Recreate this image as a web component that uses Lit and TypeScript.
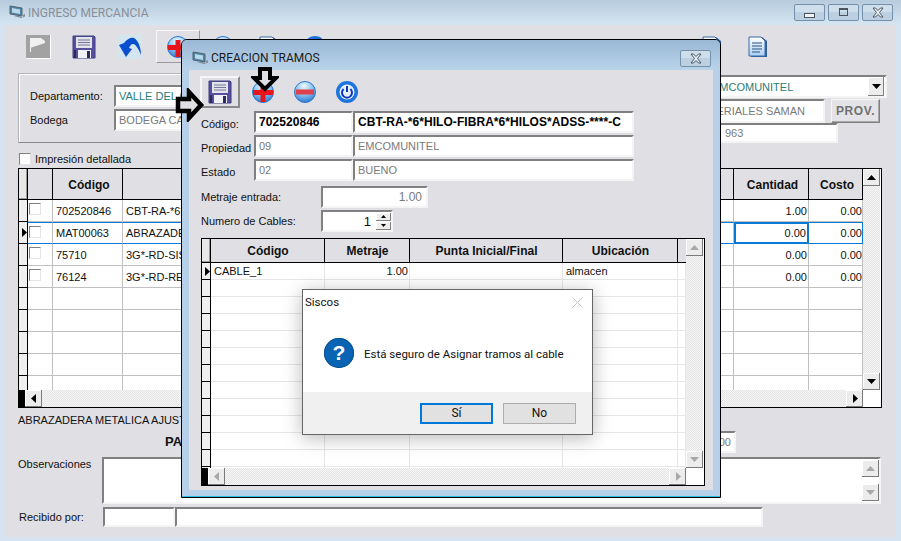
import { LitElement, html, css, svg } from 'lit'
import { customElement } from 'lit/decorators.js'

const winIcon = html`<svg class="win-icon" width="17" height="17" viewBox="0 0 17 17">
  <path d="M1 2 L13 4 V12 L1 10 Z" fill="#4f87a8" stroke="#55636e" />
  <path d="M3 4 L11 5.4 V10 L3 8.6 Z" fill="#b9d8e8" />
  <path d="M5 12 L12 14 L16 12.5 V10 L14 11 V13 L7 11.4 Z" fill="#7d8c96" />
</svg>`

const floppy = html`<svg width="24" height="24" viewBox="0 0 24 24">
  <path d="M1 1 H22 L23 2 V23 H1 Z" fill="#57509f" stroke="#3d3a80" />
  <rect x="4" y="2" width="16" height="11" fill="#e2e2ea" />
  <path d="M6 5 H18 M6 7.5 H18 M6 10 H18" stroke="#77779a" />
  <rect x="6" y="15" width="13" height="8" fill="#f2f2f6" />
  <rect x="15" y="16" width="3" height="7" fill="#2b2a5c" />
  <rect x="2" y="15" width="2" height="8" fill="#2b2a5c" />
</svg>`

const sphereDefs = svg`<defs><radialGradient id="sph" cx="45%" cy="22%" r="85%">
  <stop offset="0" stop-color="#eef7fd" /><stop offset="0.45" stop-color="#8fc8f0" /><stop offset="1" stop-color="#1f6ccc" />
</radialGradient></defs>`

const plus = html`<svg width="24" height="24" viewBox="0 0 24 24">
  ${sphereDefs}<circle cx="12" cy="12" r="10.5" fill="url(#sph)" stroke="#2a78d0" />
  <rect x="2" y="10" width="20" height="5" fill="#e8141c" /><rect x="9.5" y="5" width="5" height="17" fill="#e8141c" />
</svg>`

const minus = html`<svg width="24" height="24" viewBox="0 0 24 24">
  ${sphereDefs}<circle cx="12" cy="12" r="10.5" fill="url(#sph)" stroke="#2a78d0" />
  <rect x="3" y="9.5" width="18" height="5" fill="#e0404c" />
</svg>`

const power = html`<svg width="24" height="24" viewBox="0 0 24 24">
  <circle cx="12" cy="12" r="11" fill="#1e74dc" /><circle cx="12" cy="12" r="7.5" fill="#e4f1fb" />
  <path d="M8.6 9 A5 5 0 1 0 15.4 9" fill="none" stroke="#1238b8" stroke-width="2" />
  <path d="M12 6 V12" stroke="#1238b8" stroke-width="2" />
</svg>`

const flag = html`<svg width="25" height="24" viewBox="0 0 25 24">
  <rect x="0" y="0" width="25" height="24" fill="#fff" /><rect x="0" y="0" width="24" height="23" fill="#a2a2a2" />
  <path d="M4 3 H15 L19 6 V8 L4 13 Z" fill="#f0f0f0" /><rect x="4" y="3" width="1" height="14" fill="#f0f0f0" />
</svg>`

const undo = html`<svg width="24" height="24" viewBox="0 0 24 24">
  <rect width="24" height="24" fill="#d3e6ef" />
  <path d="M1 10 L6 8 C9 4 13 2 16 3 C20 5 23 12 23 20 C21 15 18 9 15 9 C13 9 12 11 11 13 L14 14 L8 22 Z" fill="#0a4fd0" />
</svg>`

const docIcon = html`<svg width="20" height="22" viewBox="0 0 20 22">
  <defs><linearGradient id="pg" x1="0" y1="0" x2="0" y2="1"><stop offset="0" stop-color="#fff" /><stop offset="1" stop-color="#a9d0f0" /></linearGradient></defs>
  <path d="M3 1 H14 L19 5 V21 H3 Z" fill="#2f5f9e" />
  <path d="M1 1 H13 L17 5 V20 H1 Z" fill="url(#pg)" stroke="#3a68a8" />
  <path d="M4 7 H14 M4 10 H14 M4 13 H14 M4 16 H12" stroke="#2d4f88" />
</svg>`

const xIcon = html`<svg width="14" height="11" viewBox="0 0 14 11"><path d="M2 1 H4.5 L7 3.5 L9.5 1 H12 L8.500 5.500 L12 10 H9.500 L7 7.500 L4.500 10 H2 L5.500 5.500 Z" fill="#e8eef4" stroke="#4a5560" /></svg>`
const triL = (c = '#000') => html`<svg width="6" height="9" viewBox="0 0 6 9"><path d="M5 0 V9 L0 4.500 Z" fill=${c} /></svg>`
const triR = (c = '#000') => html`<svg width="6" height="9" viewBox="0 0 6 9"><path d="M1 0 V9 L6 4.500 Z" fill=${c} /></svg>`
const triU = (c = '#000') => html`<svg width="9" height="5" viewBox="0 0 9 5"><path d="M0 5 H9 L4.500 0 Z" fill=${c} /></svg>`
const triD = (c = '#000') => html`<svg width="9" height="5" viewBox="0 0 9 5"><path d="M0 0 H9 L4.500 5 Z" fill=${c} /></svg>`

const mainRows = [
  ['702520846', 'CBT-RA-*6*HILO-FIBRA*6*HILOS*ADSS-****-C', '1.00', '0.00'],
  ['MAT00063', 'ABRAZADERA METALICA AJUSTABLE', '0.00', '0.00'],
  ['75710', '3G*-RD-SISTEMA-RADIO', '0.00', '0.00'],
  ['76124', '3G*-RD-REPETIDOR', '0.00', '0.00'],
  ['', '', '', ''], ['', '', '', ''], ['', '', '', ''], ['', '', '', ''], ['', '', '', ''],
]

@customElement('app-root')
export class AppRoot extends LitElement {
  static styles = css`
    :host {
      display: block;
      position: relative;
      width: 901px;
      height: 541px;
      overflow: hidden;
      font-family: 'Liberation Sans', Arial, sans-serif;
      font-size: 11px;
      color: #111;
      background: #d6e4f2;
    }
    svg { display: block; flex: none; }

    .titlebar {
      height: 25px;
      display: flex;
      align-items: center;
      padding: 0 8px 0 9px;
      box-sizing: border-box;
      background: linear-gradient(#b6cbdd, #d6e5f2);
      font-family: Roboto, sans-serif;
      font-size: 12px;
    }
    .titlebar .caption { margin-left: 2px; color: #8a8f96; flex: 1; }
    .ctrl {
      width: 31px;
      height: 17px;
      margin-left: 3px;
      box-sizing: border-box;
      border: 1px solid #7590aa;
      border-radius: 2px;
      background: linear-gradient(#cfdeeb 50%, #bdd0e2 50%);
      display: flex;
      align-items: center;
      justify-content: center;
    }
    .min-mark { width: 9px; height: 3px; border: 1px solid #4a5560; background: #eef3f7; margin-top: 5px; }
    .max-mark { width: 7px; height: 5px; border: 1px solid #4a5560; border-top-width: 2px; margin-bottom: 2px; }

    .client {
      margin: 0 5px 0 6px;
      height: 512px;
      box-sizing: border-box;
      padding: 0 9px 0 12px;
      background: #dfdfe4;
    }
    .toolbar { height: 48px; display: flex; align-items: flex-start; padding: 5px 106px 0 0; margin-left: -3px; box-sizing: border-box; }
    .tb {
      width: 46px;
      height: 33px;
      flex: none;
      display: flex;
      align-items: center;
      justify-content: center;
      box-sizing: border-box;
    }
    .tb.raised { border: 1px solid #9a9a9a; border-color: #f8f8f8 #9a9a9a #9a9a9a #f8f8f8; width: 44px; margin-left: 3px; }
    .tb.end { margin-left: auto; }

    .head-row { display: flex; height: 70px; }
    .panel {
      width: 580px;
      height: 70px;
      box-sizing: border-box;
      border: 1px solid #b4b4b8;
      box-shadow: inset 1px 1px #fff;
      border-right-color: #888;
      border-bottom-color: #888;
      padding: 11px 0 0 11px;
    }
    .line { display: flex; align-items: center; height: 22px; margin-bottom: 2px; }
    .line .lbl { width: 84px; }

    .field {
      box-sizing: border-box;
      height: 22px;
      background: #fff;
      border: 2px solid;
      border-color: #808080 #f4f4f4 #f4f4f4 #808080;
      display: flex;
      align-items: center;
      padding-left: 3px;
      color: #7a7a7a;
      font-size: 11px;
      white-space: nowrap;
      overflow: hidden;
      flex: none;
    }
    .teal { color: #2b7c78; }
    .panel .field { width: 460px; }

    .right-col { margin-left: auto; width: 267px; padding-top: 2px; display: flex; flex-direction: column; }
    .combo { width: 267px; height: 23px; padding-left: 90px; position: relative; }
    .combo .txt { flex: 1; }
    .drop {
      width: 16px;
      height: 19px;
      margin-right: 1px;
      background: #ececec;
      box-shadow: inset -1px -1px #808080, inset 1px 1px #fff;
      display: flex;
      align-items: center;
      justify-content: center;
    }
    .supplier { display: flex; margin-top: 1px; }
    .supplier .field { width: 205px; height: 24px; padding-left: 72px; }
    .prov {
      width: 49px;
      height: 24px;
      margin-left: 6px;
      box-sizing: border-box;
      background: #e4e4e8;
      border: 1px solid;
      border-color: #f6f6f6 #808080 #808080 #f6f6f6;
      box-shadow: inset -1px -1px #a8a8a8;
      color: #707070;
      font-weight: bold;
      font-size: 12px;
      letter-spacing: 0.6px;
      display: flex;
      align-items: center;
      justify-content: center;
    }
    .phone { width: 218px; height: 20px; padding-left: 103px; }

    .print-row { height: 25px; display: flex; align-items: center; padding-top: 7px; box-sizing: border-box; }
    .check {
      width: 12px;
      height: 12px;
      box-sizing: border-box;
      background: #fff;
      border: 1px solid;
      border-color: #808080 #e4e4e4 #e4e4e4 #808080;
      flex: none;
    }
    .print-row .check { margin: 0 4px 0 1px; }

    .grid {
      box-sizing: border-box;
      border: 1px solid #000;
      background: #fff;
      display: grid;
      overflow: hidden;
    }
    .grid.main { width: 864px; height: 240px; grid-template-columns: 844px 18px; grid-template-rows: 221px 17px; }
    .grid.sub { width: 504px; height: 248px; grid-template-columns: 484px 18px; grid-template-rows: 229px 17px; margin-top: 6px; }
    .body { overflow: hidden; }

    .main .tr { grid-template-columns: 9px 25px 70px 611px 75px 54px; }
    .sub .tr { grid-template-columns: 9px 114px 85px 153px 115px 8px; }
    .tr { display: grid; }
    .th {
      box-sizing: border-box;
      background: #dfdfe4;
      border-right: 1px solid #000;
      border-bottom: 1px solid #000;
      font-weight: bold;
      font-size: 12px;
      display: flex;
      align-items: center;
      justify-content: center;
    }
    .main .th { height: 31px; padding: 1px 0 0 3px; }
    .sub .th { height: 24px; padding-left: 1px; }
    .th.rowhead { background: #e8e8e8; box-shadow: inset -1px -1px #999; }
    .th.noline { border-right: none; }

    .td {
      box-sizing: border-box;
      border-right: 1px solid #c0c0c0;
      border-bottom: 1px solid #c0c0c0;
      display: flex;
      align-items: center;
      padding: 0 3px;
      font-size: 11px;
      white-space: nowrap;
      overflow: hidden;
    }
    .main .td { height: 22px; }
    .sub .td { height: 17px; border-color: #e6e6e6; }
    .td.num { justify-content: flex-end; padding-right: 1px; }
    .main .td.num:last-child { padding-right: 0; }
    .td.chk { padding: 0 0 3px 1px; }
    .td.rowhead {
      padding: 0;
      background: #efefef;
      border-right: 1px solid #000;
      border-bottom: 1px solid #000;
      justify-content: flex-end;
    }
    .tr.sel .td:not(.rowhead) { border-top: 1px solid #0a78d7; border-bottom: 1px solid #0a78d7; }
    .td.focus { border: 2px solid #0a78d7 !important; }
    .td.last-sel { border-right: 1px solid #0a78d7; }

    .vbar, .hbar { background: repeating-conic-gradient(#e4e4e4 0 25%, #f6f6f6 0 50%) 0 0 / 2px 2px; display: flex; }
    .vbar { flex-direction: column; justify-content: space-between; width: 17px; }
    .hbar { justify-content: space-between; }
    .sbtn {
      width: 17px;
      height: 17px;
      flex: none;
      box-sizing: border-box;
      background: #ececec;
      box-shadow: inset -1px -1px #7a7a7a, inset 1px 1px #fff;
      display: flex;
      align-items: center;
      justify-content: center;
    }
    .hstart { display: flex; }
    .black { width: 6px; background: #000; }
    .corner { background: #fff; }

    .desc-line { height: 21px; margin-top: 1px; display: flex; align-items: center; }
    .total-row { display: flex; align-items: center; height: 23px; padding-right: 151px; }
    .total-row b { margin-left: 147px; font-size: 13px; }
    .total-row .field { width: 136px; margin-left: auto; justify-content: flex-end; padding-right: 3px; }
    .obs-row { display: flex; height: 47px; margin: 4px 6px 0 0; }
    .obs-row .lbl { width: 84px; padding-top: 1px; }
    .memo {
      flex: 1;
      background: #fff;
      border: 2px solid;
      border-color: #808080 #f4f4f4 #f4f4f4 #808080;
      display: flex;
      justify-content: flex-end;
    }
    .memo .vbar { background: #fff; padding: 1px 0; }
    .recv-row { display: flex; align-items: center; margin-top: 3px; }
    .recv-row .lbl { width: 85px; padding-left: 1px; box-sizing: border-box; }
    .recv-row .field { height: 20px; }
    .recv-a { width: 72px; }
    .recv-b { width: 588px; }

    /* floating windows */
    .dialog {
      position: absolute;
      left: 181px;
      top: 39px;
      width: 540px;
      height: 459px;
      box-sizing: border-box;
      border: 1px solid #000;
      border-radius: 6px 6px 0 0;
      background: #b5d0e8;
      box-shadow: inset 0 -1px #28bfe0;
      padding: 0 7px;
    }
    .dlg-title {
      height: 30px;
      margin: 0 -7px;
      padding: 6px 9px 0 10px;
      box-sizing: border-box;
      display: flex;
      align-items: center;
      background: linear-gradient(#9ab7d5, #b9d4ea);
      border-radius: 5px 5px 0 0;
      font-family: Roboto, sans-serif;
      font-size: 12px;
      color: #1a1a1a;
    }
    .dlg-title .caption { margin-left: 2px; flex: 1; }
    .dlg-title .ctrl { margin: 0; }
    .dlg-client { height: 420px; background: #dfdfe4; box-sizing: border-box; padding: 6px 0 0 12px; }
    .dlg-tools { display: flex; align-items: center; height: 32px; margin: 0 0 3px -1px; }
    .dlg-save {
      width: 40px;
      height: 32px;
      box-sizing: border-box;
      border: 2px solid;
      border-color: #f6f6f6 #8a8a8a #8a8a8a #f6f6f6;
      display: flex;
      align-items: center;
      justify-content: center;
      margin-right: 11px;
    }
    .dlg-tools .gap { margin-right: 18px; }
    .frow { display: flex; align-items: center; height: 22px; margin-bottom: 2px; font-size: 11px; }
    .frow .lbl { width: 53px; flex: none; white-space: nowrap; padding-top: 4px; }
    .f-a { width: 99px; }
    .f-b { width: 281px; }
    .strong { color: #000; font-weight: bold; font-size: 12px; letter-spacing: 0.06px; }
    .meter { margin-top: 5px; }
    .meter .lbl, .meter-b .lbl { width: 120px; padding-top: 0; }
    .f-num { width: 107px; justify-content: flex-end; padding-right: 4px; font-size: 12px; }
    .f-spin { width: 72px; padding: 0; justify-content: flex-end; color: #111; }
    .f-spin .v { margin-right: 5px; font-size: 13px; }
    .spin { display: flex; flex-direction: column; gap: 1px; }
    .spin i {
      display: flex;
      align-items: center;
      justify-content: center;
      width: 15px;
      height: 8px;
      background: #ececec;
      box-shadow: inset -1px -1px #808080, inset 1px 1px #fff;
    }
    .spin svg { width: 5px; height: 3px; }

    .arrow { position: absolute; }
    .arrow-r { left: 175px; top: 88px; }
    .arrow-d { left: 251px; top: 66px; }

    .msgbox {
      position: absolute;
      left: 302px;
      top: 289px;
      width: 291px;
      height: 146px;
      box-sizing: border-box;
      border: 1px solid #666;
      background: #fff;
      box-shadow: 0 3px 18px rgba(0, 0, 0, 0.28);
      font-family: Roboto, sans-serif;
      font-size: 11.5px;
      display: flex;
      flex-direction: column;
    }
    .msg-title { height: 24px; padding: 0 9px 0 2px; display: flex; align-items: center; justify-content: space-between; }
    .msg-body { flex: 1; display: flex; align-items: center; padding-left: 21px; }
    .q {
      width: 30px;
      height: 30px;
      border-radius: 50%;
      background: #0a64b4;
      box-shadow: inset 0 0 0 1px #06508f;
      color: #fff;
      font: bold 21px 'Liberation Sans', sans-serif;
      display: flex;
      align-items: center;
      justify-content: center;
      margin-right: 10px;
    }
    .msg-text { padding-top: 1px; }
    .msg-foot {
      height: 42px;
      background: #f0f0f0;
      display: flex;
      justify-content: flex-end;
      align-items: center;
      gap: 10px;
      padding: 0 16px 0 0;
      font-size: 12px;
    }
    .btn {
      width: 73px;
      height: 21px;
      box-sizing: border-box;
      background: #e1e1e1;
      border: 1px solid #adadad;
      display: flex;
      align-items: center;
      justify-content: center;
    }
    .btn.def { border: 2px solid #0078d7; }
  `

  private vbar(color: string) {
    return html`<div class="vbar">
      <div class="sbtn">${triU(color)}</div>
      <div class="sbtn">${triD(color)}</div>
    </div>`
  }

  private hbar(color: string) {
    return html`<div class="hbar">
      <div class="hstart"><div class="black"></div><div class="sbtn">${triL(color)}</div></div>
      <div class="sbtn">${triR(color)}</div>
    </div>`
  }

  private renderMainGrid() {
    return html`<div class="grid main">
      <div class="body">
        <div class="tr">
          <div class="th rowhead"></div><div class="th"></div><div class="th">Código</div>
          <div class="th"></div><div class="th">Cantidad</div><div class="th">Costo</div>
        </div>
        ${mainRows.map((r, i) => html`<div class="tr ${i === 1 ? 'sel' : ''}">
          <div class="td rowhead">${i === 1 ? triR() : ''}</div>
          <div class="td chk">${r[0] ? html`<div class="check"></div>` : ''}</div>
          <div class="td">${r[0]}</div>
          <div class="td">${r[1]}</div>
          <div class="td num ${i === 1 ? 'focus' : ''}">${r[2]}</div>
          <div class="td num ${i === 1 ? 'last-sel' : ''}">${r[3]}</div>
        </div>`)}
      </div>
      ${this.vbar('#000')}
      ${this.hbar('#000')}
      <div class="corner"></div>
    </div>`
  }

  private renderSubGrid() {
    const rows = Array.from({ length: 13 }, (_, i) => i)
    return html`<div class="grid sub">
      <div class="body">
        <div class="tr">
          <div class="th rowhead"></div><div class="th">Código</div><div class="th">Metraje</div>
          <div class="th">Punta Inicial/Final</div><div class="th">Ubicación</div><div class="th noline"></div>
        </div>
        ${rows.map((i) => html`<div class="tr">
          <div class="td rowhead">${i === 0 ? triR() : ''}</div>
          <div class="td">${i === 0 ? 'CABLE_1' : ''}</div>
          <div class="td num">${i === 0 ? '1.00' : ''}</div>
          <div class="td"></div>
          <div class="td">${i === 0 ? 'almacen' : ''}</div>
          <div class="td"></div>
        </div>`)}
      </div>
      ${this.vbar('#a8a8a8')}
      ${this.hbar('#a8a8a8')}
      <div class="corner"></div>
    </div>`
  }

  private renderDialog() {
    return html`<div class="dialog">
      <div class="dlg-title">
        ${winIcon}<span class="caption">CREACION TRAMOS</span>
        <div class="ctrl">${xIcon}</div>
      </div>
      <div class="dlg-client">
        <div class="dlg-tools">
          <div class="dlg-save">${floppy}</div>
          <div class="gap">${plus}</div>
          <div class="gap">${minus}</div>
          <div>${power}</div>
        </div>
        <div class="frow"><span class="lbl">Código:</span>
          <div class="field f-a strong">702520846</div>
          <div class="field f-b strong">CBT-RA-*6*HILO-FIBRA*6*HILOS*ADSS-****-C</div>
        </div>
        <div class="frow"><span class="lbl">Propiedad</span>
          <div class="field f-a">09</div><div class="field f-b">EMCOMUNITEL</div>
        </div>
        <div class="frow"><span class="lbl">Estado</span>
          <div class="field f-a">02</div><div class="field f-b">BUENO</div>
        </div>
        <div class="frow meter"><span class="lbl">Metraje entrada:</span>
          <div class="field f-num">1.00</div>
        </div>
        <div class="frow meter-b"><span class="lbl">Numero de Cables:</span>
          <div class="field f-spin">
            <span class="v">1</span>
            <div class="spin"><i>${triU()}</i><i>${triD()}</i></div>
          </div>
        </div>
        ${this.renderSubGrid()}
      </div>
    </div>`
  }

  private renderMsgBox() {
    return html`<div class="msgbox">
      <div class="msg-title">
        <span>Siscos</span>
        <svg width="11" height="11" viewBox="0 0 11 11"><path d="M0.500 0.500 L10.500 10.500 M10.500 0.500 L0.500 10.500" stroke="#c4c4c4" /></svg>
      </div>
      <div class="msg-body">
        <div class="q">?</div>
        <span class="msg-text">Está seguro de Asignar tramos al cable</span>
      </div>
      <div class="msg-foot">
        <div class="btn def">Sí</div>
        <div class="btn">No</div>
      </div>
    </div>`
  }

  render() {
    return html`
      <div class="titlebar">
        ${winIcon}<span class="caption">INGRESO MERCANCIA</span>
        <div class="ctrl"><div class="min-mark"></div></div>
        <div class="ctrl"><div class="max-mark"></div></div>
        <div class="ctrl">${xIcon}</div>
      </div>
      <div class="client">
        <div class="toolbar">
          <div class="tb">${flag}</div>
          <div class="tb">${floppy}</div>
          <div class="tb">${undo}</div>
          <div class="tb raised">${plus}</div>
          <div class="tb">${minus}</div>
          <div class="tb">${docIcon}</div>
          <div class="tb">${power}</div>
          <div class="tb end">${docIcon}</div>
          <div class="tb">${docIcon}</div>
        </div>
        <div class="head-row">
          <div class="panel">
            <div class="line"><span class="lbl">Departamento:</span><div class="field teal">VALLE DEL CAUCA</div></div>
            <div class="line"><span class="lbl">Bodega</span><div class="field">BODEGA CALI</div></div>
          </div>
          <div class="right-col">
            <div class="field combo teal"><span class="txt">EMCOMUNITEL</span><div class="drop">${triD()}</div></div>
            <div class="supplier">
              <div class="field">MATERIALES SAMAN</div>
              <div class="prov">PROV.</div>
            </div>
            <div class="field phone">963</div>
          </div>
        </div>
        <div class="print-row"><div class="check"></div>Impresión detallada</div>
        ${this.renderMainGrid()}
        <div class="desc-line">ABRAZADERA METALICA AJUSTABLE</div>
        <div class="total-row"><b>PA</b><div class="field">0.00</div></div>
        <div class="obs-row">
          <span class="lbl">Observaciones</span>
          <div class="memo">${this.vbar('#a8a8a8')}</div>
        </div>
        <div class="recv-row">
          <span class="lbl">Recibido por:</span>
          <div class="field recv-a"></div>
          <div class="field recv-b"></div>
        </div>
      </div>
      ${this.renderDialog()}
      <svg class="arrow arrow-r" width="30" height="34" viewBox="0 0 30 34">
        <path d="M3 11 H14 V4 L26 17 L14 30 V23 H3 Z" fill="#dfdfe4" stroke="#000" stroke-width="4.500" />
      </svg>
      <svg class="arrow arrow-d" width="28" height="26" viewBox="0 0 28 26">
        <path d="M9 3 H19 V12 H25 L14 23 L3 12 H9 Z" fill="#dfdfe4" stroke="#000" stroke-width="4" />
      </svg>
      ${this.renderMsgBox()}
    `
  }
}
